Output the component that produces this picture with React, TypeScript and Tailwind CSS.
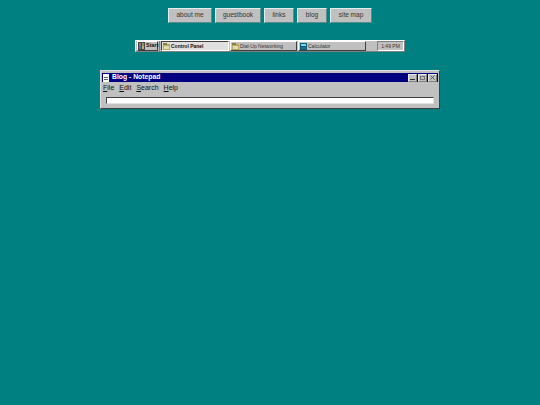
const raised = "border border-t-white border-l-white border-r-[#808080] border-b-[#808080]";
const sans = "font-['Liberation_Sans',Arial,sans-serif]";

const links = [
  { label: "about me", w: "w-[44px]" },
  { label: "guestbook", w: "w-[46px]" },
  { label: "links", w: "w-[30px]" },
  { label: "blog", w: "w-[30px]" },
  { label: "site map", w: "w-[42px]" },
];

function FolderIcon() {
  return (
    <svg width="7" height="7" viewBox="0 0 7 7" className="shrink-0">
      <rect x="0" y="1" width="7" height="6" fill="#b8a95a" />
      <rect x="0" y="0" width="4" height="2" fill="#8d8246" />
      <rect x="1" y="3" width="5" height="3" fill="#e2dcb4" />
    </svg>
  );
}

function CalcIcon() {
  return (
    <svg width="7" height="7" viewBox="0 0 7 7" className="shrink-0">
      <rect x="0" y="0" width="7" height="7" fill="#0b5f7c" />
      <rect x="1" y="1" width="5" height="2" fill="#7fd4e8" />
      <rect x="1" y="4" width="5" height="2" fill="#2a6a84" />
    </svg>
  );
}

function StartLogo() {
  return (
    <svg width="7" height="8" viewBox="0 0 7 8" className="shrink-0">
      <rect x="0" y="0" width="7" height="8" fill="#4a4a4a" />
      <rect x="1" y="1" width="2" height="3" fill="#b06464" />
      <rect x="4" y="1" width="2" height="3" fill="#64a470" />
      <rect x="1" y="4" width="2" height="3" fill="#6470b0" />
      <rect x="4" y="4" width="2" height="3" fill="#c0b064" />
    </svg>
  );
}

function TitleButton({ children }: { children: React.ReactNode }) {
  return (
    <div className="w-[9px] h-[8px] bg-[#c0c0c0] border border-t-[#e8e8e8] border-l-[#e8e8e8] border-r-[#808080] border-b-[#808080] flex items-center justify-center">
      {children}
    </div>
  );
}

export default function App() {
  return (
    <div className={`min-h-[405px] bg-[#008080] flex flex-col items-center pt-[8px] ${sans}`}>
      {/* Nav */}
      <div className="flex gap-[3px] h-[15px]">
        {links.map((l) => (
          <div
            key={l.label}
            className={`${l.w} h-[15px] bg-[#c0c0c0] border border-t-[#dfeeee] border-l-[#dfeeee] border-r-[#5a8a8a] border-b-[#5a8a8a] flex items-center justify-center text-[6.5px] leading-none text-[#333]`}
          >
            {l.label}
          </div>
        ))}
      </div>

      {/* Taskbar */}
      <div className={`mt-[17px] w-[270px] h-[12px] bg-[#c0c0c0] ${raised} flex items-center pl-[1px] text-[5px] leading-none text-[#333]`}>
        <div className="w-[21px] h-[10px] border border-t-white border-l-white border-r-[#404040] border-b-[#404040] flex items-center gap-[1px] font-bold text-[5.5px] text-[#111]">
          <StartLogo />
          Start
        </div>
        <div className="ml-[1px] w-[1px] h-[10px] bg-[#808080]" />
        <div className="ml-[1px] w-[68px] h-[10px] bg-[#e0e0e0] border border-t-[#404040] border-l-[#404040] border-r-white border-b-white flex items-center gap-[1px] pl-[1px] font-bold text-[#111]">
          <FolderIcon />
          Control Panel
        </div>
        <div className="ml-[1px] w-[67px] h-[10px] border border-t-white border-l-white border-r-[#404040] border-b-[#404040] flex items-center gap-[1px] pl-[1px]">
          <FolderIcon />
          Dial-Up Networking
        </div>
        <div className="ml-[1px] w-[68px] h-[10px] border border-t-white border-l-white border-r-[#404040] border-b-[#404040] flex items-center gap-[1px] pl-[1px] text-[5px]">
          <CalcIcon />
          Calculator
        </div>
        <div className="ml-auto w-[27px] h-[10px] border border-t-[#808080] border-l-[#808080] border-r-white border-b-white flex items-center justify-center">
          1:49 PM
        </div>
      </div>

      {/* Window */}
      <div className="mt-[18px] w-[340px] h-[39px] bg-[#c0c0c0] border border-t-[#dfdfdf] border-l-[#dfdfdf] border-r-[#404040] border-b-[#404040] px-[1px] pt-[2px] flex flex-col">
        <div className="h-[9px] bg-[#000080] flex items-center pl-[1px] pr-[1px]">
          <svg width="6" height="8" viewBox="0 0 6 8" className="shrink-0">
            <rect x="0" y="0" width="6" height="8" fill="#ffffff" />
            <rect x="1" y="3" width="4" height="1" fill="#606060" />
            <rect x="1" y="5" width="4" height="1" fill="#606060" />
          </svg>
          <span className="ml-[3px] text-[6.8px] leading-none font-bold text-white">Blog - Notepad</span>
          <div className="ml-auto flex gap-[1px]">
            <TitleButton>
              <div className="w-[5px] h-[1px] bg-[#333] mt-[3px]" />
            </TitleButton>
            <TitleButton>
              <div className="w-[5px] h-[4px] border border-[#777]" />
            </TitleButton>
            <TitleButton>
              <svg width="5" height="5" viewBox="0 0 5 5">
                <path d="M0.5 0.5L4.5 4.5M4.5 0.5L0.5 4.5" stroke="#555" strokeWidth="1" />
              </svg>
            </TitleButton>
          </div>
        </div>
        <div className="h-[11px] flex items-center gap-[5px] pl-[1px] text-[7px] leading-none text-[#111]">
          <span><u>F</u>ile</span>
          <span><u>E</u>dit</span>
          <span><u>S</u>earch</span>
          <span><u>H</u>elp</span>
        </div>
        <div className="mt-[4px] ml-[4px] mr-[4px] h-[7px] bg-white border border-t-[#404040] border-l-[#404040] border-r-[#dfdfdf] border-b-[#dfdfdf]" />
      </div>
    </div>
  );
}
